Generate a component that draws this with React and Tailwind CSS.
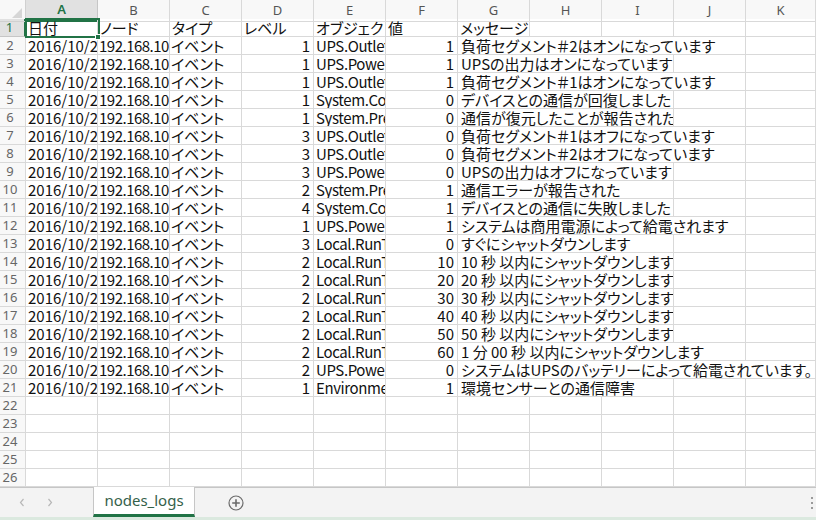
import { Fragment } from 'react'

const cols = ['A', 'B', 'C', 'D', 'E', 'F', 'G', 'H', 'I', 'J', 'K']

// [level, object, value, message, span of message cell]
const rows = [
  [1, 'UPS.Outlet.2', 1, '負荷セグメント＃2はオンになっています', 4],
  [1, 'UPS.PowerSummary', 1, 'UPSの出力はオンになっています', 3],
  [1, 'UPS.Outlet.1', 1, '負荷セグメント＃1はオンになっています', 4],
  [1, 'System.Communication', 0, 'デバイスとの通信が回復しました', 3],
  [1, 'System.PreCommunication', 0, '通信が復元したことが報告された', 3],
  [3, 'UPS.Outlet.1', 0, '負荷セグメント＃1はオフになっています', 4],
  [3, 'UPS.Outlet.2', 0, '負荷セグメント＃2はオフになっています', 4],
  [3, 'UPS.PowerSummary', 0, 'UPSの出力はオフになっています', 3],
  [2, 'System.PreCommunication', 1, '通信エラーが報告された', 3],
  [4, 'System.Communication', 1, 'デバイスとの通信に失敗しました', 3],
  [1, 'UPS.PowerSummary', 1, 'システムは商用電源によって給電されます', 4],
  [3, 'Local.RunTime', 0, 'すぐにシャットダウンします', 3],
  [2, 'Local.RunTime', 10, '10 秒 以内にシャットダウンします', 3],
  [2, 'Local.RunTime', 20, '20 秒 以内にシャットダウンします', 3],
  [2, 'Local.RunTime', 30, '30 秒 以内にシャットダウンします', 3],
  [2, 'Local.RunTime', 40, '40 秒 以内にシャットダウンします', 3],
  [2, 'Local.RunTime', 50, '50 秒 以内にシャットダウンします', 3],
  [2, 'Local.RunTime', 60, '1 分 00 秒 以内にシャットダウンします', 4],
  [2, 'UPS.PowerSummary', 0, 'システムはUPSのバッテリーによって給電されています。', 5],
  [1, 'Environment', 1, '環境センサーとの通信障害', 3],
]

const spanClass = { 1: '', 2: 'col-span-2', 3: 'col-span-3', 4: 'col-span-4', 5: 'col-span-5' }

const grid = 'grid grid-cols-[26px_repeat(10,72px)_1fr]'
const cell = 'h-[18px] border-r border-b border-[#d9d9d9] overflow-hidden whitespace-nowrap flex items-end leading-[17px] text-[15px] text-[#111]'
const jp = "font-['Noto_Sans_CJK_JP',sans-serif] [font-feature-settings:'palt']"

function RowHead({ n, active }) {
  return (
    <div className={`h-[18px] border-r border-b flex items-center justify-center pr-[5px] text-[13px] font-['Noto_Sans',sans-serif] ${active ? 'bg-[#e1e1e1] text-[#217346] border-r-2 border-r-[#217346] border-b-[#c6c6c6]' : 'bg-[#f8f8f8] text-[#666] border-[#d9d9d9]'}`}>
      {n}
    </div>
  )
}

function Empty() {
  return <div className={cell} />
}

export default function App() {
  return (
    <div className="w-[816px] h-[520px] bg-white flex flex-col overflow-hidden select-none">
      {/* column headers */}
      <div className={`${grid} h-[19px] bg-[#f8f8f8]`}>
        <div className="border-r border-b border-[#d0d0d0] relative">
          <div className="absolute right-[3px] bottom-[3px] w-0 h-0 border-l-[10px] border-l-transparent border-b-[10px] border-b-[#d6d6d6]" />
        </div>
        {cols.map((c) => (
          <div
            key={c}
            className={`flex items-center justify-center text-[13px] font-['Noto_Sans',sans-serif] border-r ${c === 'A' ? 'bg-[#e1e1e1] text-[#217346] font-semibold border-b-2 border-b-[#217346] border-r-[#c6c6c6]' : 'text-[#555] border-b border-[#d9d9d9]'}`}
          >
            {c}
          </div>
        ))}
      </div>

      {/* row 1 */}
      <div className={grid}>
        <RowHead n={1} active />
        <div className={`${cell} ${jp} pl-[2px] relative overflow-visible`}>
          日付
          <div className="absolute -left-[1px] -top-[1px] w-[75px] h-[20px] border-2 border-[#217346] pointer-events-none" />
          <div className="absolute -right-[4px] -bottom-[4px] w-[6px] h-[6px] bg-[#217346] border border-white z-10" />
        </div>
        <div className={`${cell} ${jp} pl-[2px]`}>ノード</div>
        <div className={`${cell} ${jp} pl-[2px]`}>タイプ</div>
        <div className={`${cell} ${jp} pl-[2px]`}>レベル</div>
        <div className={`${cell} ${jp} pl-[2px]`}>オブジェクト</div>
        <div className={`${cell} ${jp} pl-[2px]`}>値</div>
        <div className={`${cell} ${jp} pl-[2px]`}>メッセージ</div>
        <Empty />
        <Empty />
        <Empty />
        <Empty />
      </div>

      {/* data rows */}
      {rows.map(([level, obj, val, msg, span], i) => (
        <div key={i} className={grid}>
          <RowHead n={i + 2} />
          <div className={`${cell} ${jp} pl-[2px]`}>2016/10/21 9:15</div>
          <div className={`${cell} ${jp} pl-[1px] tracking-[-0.5px]`}>192.168.10</div>
          <div className={`${cell} ${jp} pl-[1px]`}>イベント</div>
          <div className={`${cell} ${jp} justify-end pr-[3px]`}>{level}</div>
          <div className={`${cell} ${jp} pl-[2px] tracking-[-0.4px]`}>{obj}</div>
          <div className={`${cell} ${jp} justify-end pr-[3px]`}>{val}</div>
          <div className={`${cell} ${jp} pl-[3px] ${spanClass[span]}`}>{msg}</div>
          {Array.from({ length: 5 - span }).map((_, k) => (
            <Empty key={k} />
          ))}
        </div>
      ))}

      {/* empty rows */}
      {[22, 23, 24, 25, 26].map((n) => (
        <div key={n} className={grid}>
          <RowHead n={n} />
          {cols.map((c) => (
            <Fragment key={c}>
              <Empty />
            </Fragment>
          ))}
        </div>
      ))}

      {/* sheet tabs */}
      <div className="flex-1 bg-[#f3f3f3] border-t border-[#c6c6c6] flex items-stretch relative">
        <div className="w-[93px] flex items-center pl-[19px] gap-[22px] pb-[3px]">
          <svg width="6" height="9" viewBox="0 0 6 9">
            <path d="M4.5 1L1.5 4.5L4.5 8" fill="none" stroke="#b8b8b8" strokeWidth="1.2" />
          </svg>
          <svg width="6" height="9" viewBox="0 0 6 9">
            <path d="M1.5 1L4.5 4.5L1.5 8" fill="none" stroke="#b8b8b8" strokeWidth="1.2" />
          </svg>
        </div>
        <div className="w-[102px] -mt-px bg-white border-x border-[#c6c6c6] border-b-[3px] border-b-[#217346] mb-[3px] flex items-center justify-center text-[15px] text-[#35614a] font-['Noto_Sans',sans-serif] pb-[1px]">
          nodes_logs
        </div>
        <div className="w-[82px] flex items-center justify-center pb-[3px]">
          <svg width="16" height="16" viewBox="0 0 16 16">
            <circle cx="8" cy="8" r="7" fill="none" stroke="#6b6b6b" strokeWidth="1.2" />
            <path d="M8 4.2v7.6M4.2 8h7.6" stroke="#6b6b6b" strokeWidth="1.6" />
          </svg>
        </div>
        <div className="flex-1" />
        <div className="w-[6px] flex flex-col items-center justify-center gap-[3px] pb-[3px] pr-[2px]">
          <span className="w-[2px] h-[2px] bg-[#9a9a9a]" />
          <span className="w-[2px] h-[2px] bg-[#9a9a9a]" />
          <span className="w-[2px] h-[2px] bg-[#9a9a9a]" />
        </div>
        <div className="absolute left-0 right-0 bottom-0 h-[3px] bg-[#dbe9df]" />
      </div>
    </div>
  )
}
